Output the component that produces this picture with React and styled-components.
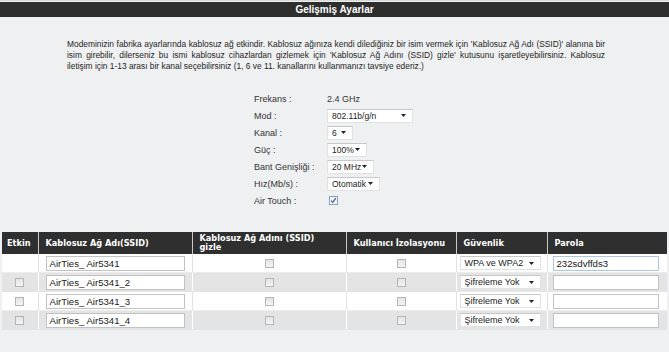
import React from 'react'
import styled, { createGlobalStyle } from 'styled-components'

const GlobalStyle = createGlobalStyle`
  html, body {
    margin: 0;
    padding: 0;
    background: #eff0f1;
  }
  body {
    font-family: "Liberation Sans", Arial, sans-serif;
    color: #222;
  }
`

const Page = styled.div`
  width: 669px;
  height: 352px;
  overflow: hidden;
  padding-top: 1px;
  box-sizing: border-box;
  border-top: 1px solid #d8d8d8;
`

const TitleBar = styled.div`
  height: 15px;
  background: #2e2e2e;
  color: #fff;
  font-weight: bold;
  font-size: 10px;
  line-height: 15px;
  text-align: center;
`

const Intro = styled.div`
  margin: 22px 0 0 67px;
  width: 538px;
  font-size: 8.4px;
  line-height: 11px;
  color: #1e1e1e;
`

const Line = styled.div`
  white-space: nowrap;
  text-align: ${p => (p.$justify ? 'justify' : 'left')};
  text-align-last: ${p => (p.$justify ? 'justify' : 'left')};
`

const Form = styled.div`
  margin: 18px 0 0 254px;
  display: grid;
  grid-template-columns: 73px auto;
  grid-auto-rows: 17px;
  align-items: center;
  font-size: 9px;
  color: #333;
`

const Label = styled.div`
  white-space: nowrap;
`

const Value = styled.div`
  display: flex;
  align-items: center;
  padding-left: ${p => p.$indent || 0}px;
`

const SelectBox = styled.div`
  width: ${p => p.$w}px;
  height: 14px;
  box-sizing: border-box;
  background: #fff;
  border: 1px solid #e2e2e2;
  border-top-color: #c8c8c8;
  display: flex;
  align-items: center;
  justify-content: space-between;
  padding: 0 6px 0 4px;
  font-size: ${p => p.$fs || 8.5}px;
  color: #222;
  white-space: nowrap;
`

const Arrow = () => (
  <svg width="5" height="3" viewBox="0 0 5 3">
    <path d="M0 0 H5 L2.5 3 Z" fill="#222" />
  </svg>
)

const Select = ({ w, fs, children }) => (
  <SelectBox $w={w} $fs={fs}>
    <span>{children}</span>
    <Arrow />
  </SelectBox>
)

const Box = styled.span`
  display: inline-flex;
  align-items: center;
  justify-content: center;
  width: 9px;
  height: 9px;
  box-sizing: border-box;
  border: 1px solid ${p => (p.$checked ? '#8aa2bd' : '#b5b5b5')};
  background: ${p => (p.$checked ? '#eef3f8' : 'linear-gradient(#e4e4e4, #f4f4f4)')};
`

const Check = ({ checked }) => (
  <Box $checked={checked}>
    {checked && (
      <svg width="7" height="7" viewBox="0 0 7 7">
        <path d="M1.2 3.6 L2.8 5.4 L5.8 1.2" stroke="#3a5f9a" strokeWidth="1.2" fill="none" />
      </svg>
    )}
  </Box>
)

const Table = styled.table`
  margin: 23px 2px 0 2px;
  width: 665px;
  table-layout: fixed;
  border-collapse: collapse;
`

const Th = styled.th`
  background: #2f2f2f;
  color: #fff;
  font-family: "DejaVu Sans", Verdana, sans-serif;
  font-weight: bold;
  font-size: 8.2px;
  line-height: 9px;
  text-align: left;
  padding: 0 6px 0 7px;
  height: 22px;
  vertical-align: middle;
  border-left: 1px solid #c9c9c9;
  &:first-child {
    border-left: none;
    padding-left: 5px;
  }
`

const Tr = styled.tr`
  background: ${p => (p.$alt ? '#e4e4e4' : '#ffffff')};
`

const Td = styled.td`
  height: 18px;
  padding: 0 6px 0 ${p => (p.$pl != null ? p.$pl : 6)}px;
  vertical-align: middle;
  text-align: ${p => (p.$center ? 'center' : 'left')};
  border-left: 1px solid ${p => (p.$alt ? '#ffffff' : '#e2e2e2')};
  border-bottom: 1px solid ${p => (p.$alt ? '#e4e4e4' : '#ececec')};
  &:first-child {
    border-left: none;
  }
  font-size: 0;
`

const TextInput = styled.div`
  width: ${p => p.$w}px;
  height: 15px;
  box-sizing: border-box;
  background: #fff;
  border: 1px solid ${p => (p.$focus ? '#a9c8e6' : '#c2c2c2')};
  font-size: 9.6px;
  line-height: 13px;
  padding-left: 3px;
  color: #222;
  white-space: nowrap;
`

const rows = [
  { ssid: 'AirTies_ Air5341', sec: 'WPA ve WPA2', pass: '232sdvffds3', main: true },
  { ssid: 'AirTies_ Air5341_2', sec: 'Şifreleme Yok', pass: '' },
  { ssid: 'AirTies_ Air5341_3', sec: 'Şifreleme Yok', pass: '' },
  { ssid: 'AirTies_ Air5341_4', sec: 'Şifreleme Yok', pass: '' },
]

export default function App() {
  return (
    <Page>
      <GlobalStyle />
      <TitleBar>Gelişmiş Ayarlar</TitleBar>
      <Intro>
        <Line $justify>Modeminizin fabrika ayarlarında kablosuz ağ etkindir. Kablosuz ağınıza kendi dilediğiniz bir isim vermek için 'Kablosuz Ağ Adı (SSID)' alanına bir</Line>
        <Line $justify>isim girebilir, dilerseniz bu ismi kablosuz cihazlardan gizlemek için 'Kablosuz Ağ Adını (SSID) gizle' kutusunu işaretleyebilirsiniz. Kablosuz</Line>
        <Line>iletişim için 1-13 arası bir kanal seçebilirsiniz (1, 6 ve 11. kanalların&#305; kullanmanızı tavsiye ederiz.)</Line>
      </Intro>
      <Form>
        <Label>Frekans :</Label>
        <Value>2.4 GHz</Value>
        <Label>Mod :</Label>
        <Value><Select w={86}>802.11b/g/n</Select></Value>
        <Label>Kanal :</Label>
        <Value><Select w={26}>6</Select></Value>
        <Label>Güç :</Label>
        <Value><Select w={40}>100%</Select></Value>
        <Label>Bant Genişliği :</Label>
        <Value><Select w={47}>20 MHz</Select></Value>
        <Label>Hız(Mb/s) :</Label>
        <Value><Select w={53}>Otomatik</Select></Value>
        <Label>Air Touch :</Label>
        <Value $indent={2}><Check checked /></Value>
      </Form>
      <Table>
        <colgroup>
          <col style={{ width: 36 }} />
          <col style={{ width: 154 }} />
          <col style={{ width: 154 }} />
          <col style={{ width: 110 }} />
          <col style={{ width: 91 }} />
          <col style={{ width: 120 }} />
        </colgroup>
        <thead>
          <tr>
            <Th>Etkin</Th>
            <Th>Kablosuz Ağ Adı(SSID)</Th>
            <Th>Kablosuz Ağ Adını (SSID)<br />gizle</Th>
            <Th>Kullanıcı İzolasyonu</Th>
            <Th>Güvenlik</Th>
            <Th>Parola</Th>
          </tr>
        </thead>
        <tbody>
          {rows.map((r, i) => {
            const alt = i % 2 === 1
            return (
              <Tr key={i} $alt={alt}>
                <Td $alt={alt} $center>{!r.main && <Check />}</Td>
                <Td $alt={alt} $pl={7}><TextInput $w={139}>{r.ssid}</TextInput></Td>
                <Td $alt={alt} $center><Check /></Td>
                <Td $alt={alt} $center><Check /></Td>
                <Td $alt={alt} $pl={3}><Select w={81} fs={9}>{r.sec}</Select></Td>
                <Td $alt={alt} $pl={5}><TextInput $w={106} $focus={r.main}>{r.pass}</TextInput></Td>
              </Tr>
            )
          })}
        </tbody>
      </Table>
    </Page>
  )
}
